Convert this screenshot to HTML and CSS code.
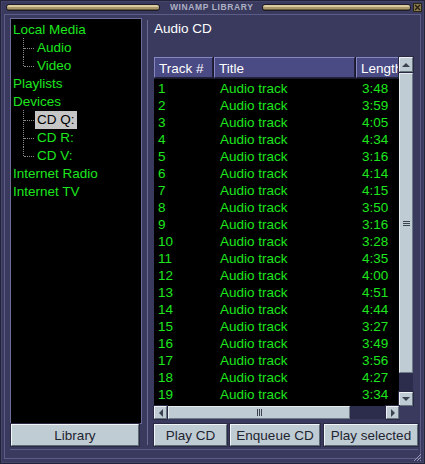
FILE: index.html
```html
<!DOCTYPE html>
<html>
<head>
<meta charset="utf-8">
<link rel="stylesheet" href="styles.css">
</head>
<body>
<div class="window">
  <div class="titlebar">
    <div class="grip grip-left"></div>
    <div class="title">WINAMP LIBRARY</div>
    <div class="grip grip-right"></div>
    <div class="close">
      <svg width="9" height="9" viewBox="0 0 9 9"><rect x="0.5" y="0.5" width="8" height="8" fill="#8a7a4e" stroke="#2a2618"/><path d="M2 2L7 7M7 2L2 7" stroke="#221e10" stroke-width="1.3"/></svg>
    </div>
  </div>
  <div class="frame">
    <div class="main">
      <div class="leftcol">
        <div class="tree">
          <div class="node">Local Media</div>
          <div class="children">
            <div class="child"><span class="label">Audio</span></div>
            <div class="child"><span class="label">Video</span></div>
          </div>
          <div class="node">Playlists</div>
          <div class="node">Devices</div>
          <div class="children">
            <div class="child"><span class="label selected">CD Q:</span></div>
            <div class="child"><span class="label">CD R:</span></div>
            <div class="child"><span class="label">CD V:</span></div>
          </div>
          <div class="node">Internet Radio</div>
          <div class="node">Internet TV</div>
        </div>
        <div class="btn btn-lib">Library</div>
      </div>
      <div class="divider"></div>
      <div class="rightcol">
        <div class="heading">Audio CD</div>
        <div class="list">
          <div class="listmain">
            <div class="header">
              <div class="hcell">Track #</div>
              <div class="hcell">Title</div>
              <div class="hcell">Length</div>
            </div>
            <div class="rows">
              <div class="row"><span>1</span><span>Audio track</span><span>3:48</span></div>
              <div class="row"><span>2</span><span>Audio track</span><span>3:59</span></div>
              <div class="row"><span>3</span><span>Audio track</span><span>4:05</span></div>
              <div class="row"><span>4</span><span>Audio track</span><span>4:34</span></div>
              <div class="row"><span>5</span><span>Audio track</span><span>3:16</span></div>
              <div class="row"><span>6</span><span>Audio track</span><span>4:14</span></div>
              <div class="row"><span>7</span><span>Audio track</span><span>4:15</span></div>
              <div class="row"><span>8</span><span>Audio track</span><span>3:50</span></div>
              <div class="row"><span>9</span><span>Audio track</span><span>3:16</span></div>
              <div class="row"><span>10</span><span>Audio track</span><span>3:28</span></div>
              <div class="row"><span>11</span><span>Audio track</span><span>4:35</span></div>
              <div class="row"><span>12</span><span>Audio track</span><span>4:00</span></div>
              <div class="row"><span>13</span><span>Audio track</span><span>4:51</span></div>
              <div class="row"><span>14</span><span>Audio track</span><span>4:44</span></div>
              <div class="row"><span>15</span><span>Audio track</span><span>3:27</span></div>
              <div class="row"><span>16</span><span>Audio track</span><span>3:49</span></div>
              <div class="row"><span>17</span><span>Audio track</span><span>3:56</span></div>
              <div class="row"><span>18</span><span>Audio track</span><span>4:27</span></div>
              <div class="row"><span>19</span><span>Audio track</span><span>3:34</span></div>
            </div>
          </div>
          <div class="vscroll">
            <div class="sbtn"><span class="arrow-up"></span></div>
            <div class="vthumb"><span class="vgrip"></span></div>
            <div class="strack"></div>
            <div class="sbtn sbtn-down"><span class="arrow-down"></span></div>
          </div>
          <div class="hscroll">
            <div class="sbtn"><span class="arrow-left"></span></div>
            <div class="hthumb"><span class="hgrip"></span></div>
            <div class="strack"></div>
            <div class="sbtn"><span class="arrow-right"></span></div>
          </div>
          <div class="corner"></div>
        </div>
        <div class="buttons">
          <div class="btn btn-play">Play CD</div>
          <div class="btn btn-enq">Enqueue CD</div>
          <div class="btn btn-sel">Play selected</div>
        </div>
      </div>
    </div>
    <div class="bottomline"></div>
  </div>
  <svg class="resize" width="9" height="9" viewBox="0 0 9 9">
    <path d="M8 1L1 8M8 4L4 8M8 7L7 8" stroke="#9a9ab8" stroke-width="1"/>
  </svg>
</div>
</body>
</html>
```

FILE: styles.css
```css
* { box-sizing: border-box; }
html, body { margin: 0; padding: 0; background: #393a5e; }
body {
  font-family: "Liberation Sans", Arial, sans-serif;
  font-size: 13.5px;
}
.window {
  position: relative;
  width: 425px;
  height: 464px;
  background: #393a5e;
  display: flex;
  flex-direction: column;
  box-shadow: inset 0 0 0 1px #23233a, inset 0 0 0 2px #45456c;
  overflow: hidden;
}
.titlebar {
  height: 14px;
  display: flex;
  align-items: center;
  padding: 0 3px 0 6px;
}
.grip {
  height: 7px;
  border: 1px solid #1c1c26;
  border-radius: 3px;
  background: linear-gradient(#dccca0 0, #dccca0 2px, #a8986c 2px, #a8986c 4px, #6c5e3c 4px);
}
.grip-left { width: 154px; }
.grip-right { flex: 1; }
.title {
  margin: 0 9px 0 10px;
  font-size: 8.5px;
  font-weight: bold;
  letter-spacing: 0.6px;
  color: #aeb0c4;
  line-height: 10px;
}
.close { width: 9px; height: 9px; margin-left: 2px; display: flex; }
.frame {
  flex: 1;
  margin: 0 4px 5px 4px;
  border: 1px solid #5c5c88;
  padding: 3px 2px 0 5px;
  display: flex;
  flex-direction: column;
}
.main {
  height: 429px;
  display: flex;
}
.leftcol {
  width: 132px;
  display: flex;
  flex-direction: column;
}
.tree {
  height: 406px;
  background: #000;
  border: 1px solid #6c6c96;
  padding: 2px 0 0 0;
  color: #1ee61e;
  line-height: 18px;
}
.node { padding-left: 2px; height: 18px; white-space: nowrap; }
.child {
  position: relative;
  height: 18px;
  padding-left: 24px;
}
.child::before {
  content: "";
  position: absolute;
  left: 12px;
  top: -1px;
  height: calc(100% + 1px);
  border-left: 1px dotted #8a8a8a;
}
.child:last-child::before { height: 10px; }
.child::after {
  content: "";
  position: absolute;
  left: 13px;
  top: 9px;
  width: 10px;
  border-top: 1px dotted #8a8a8a;
}
.label { padding: 0 2px; display: inline-block; height: 18px; }
.label.selected { background: #c6c6c6; color: #000; }
.btn {
  height: 22px;
  background: #c0ccd4;
  border: 1px solid;
  border-color: #f2f6f8 #5e6c78 #5e6c78 #f2f6f8;
  box-shadow: 0 0 0 1px #2a2a44;
  color: #1e2430;
  text-align: center;
  line-height: 20px;
  padding-top: 1px;
  white-space: nowrap;
  overflow: hidden;
}
.btn-lib { width: 128px; margin-left: 1px; }
.divider {
  width: 1px;
  margin: 2px 6px 2px 5px;
  background: #6a6a94;
}
.rightcol {
  flex: 1;
  display: flex;
  flex-direction: column;
}
.heading {
  height: 39px;
  padding-top: 1px;
  line-height: 20px;
  color: #ffffff;
}
.list {
  width: 259px;
  height: 362px;
  display: grid;
  grid-template-columns: 245px 14px;
  grid-template-rows: 349px 13px;
}
.listmain { background: #000; overflow: hidden; }
.header {
  height: 22px;
  display: grid;
  grid-template-columns: 60px 142px 1fr;
  background: #1a1a2c;
}
.hcell {
  height: 21px;
  margin-right: 1px;
  background: #4a4a84;
  border: 1px solid;
  border-color: #8686c2 #22223a #22223a #8686c2;
  color: #fff;
  padding-left: 4px;
  padding-top: 1px;
  line-height: 19px;
  white-space: nowrap;
  overflow: hidden;
}
.hcell:last-child { margin-right: 0; }
.rows { color: #1ee61e; padding-top: 1px; }
.row {
  height: 17px;
  line-height: 17px;
  display: grid;
  grid-template-columns: 60px 142px 1fr;
  white-space: nowrap;
}
.row span:nth-child(1) { padding-left: 4px; }
.row span:nth-child(2) { padding-left: 6px; }
.row span:nth-child(3) { padding-left: 6px; }
.vscroll {
  display: flex;
  flex-direction: column;
}
.sbtn {
  width: 13px;
  height: 13px;
  background: #c0ccd4;
  border: 1px solid;
  border-color: #eef2f6 #66747e #66747e #eef2f6;
  box-shadow: 0 0 0 1px #2a2a44;
  display: flex;
  align-items: center;
  justify-content: center;
  flex: none;
}
.vscroll .sbtn { width: 14px; height: 15px; }
.vscroll .sbtn-down { height: 14px; }
.vthumb {
  height: 300px;
  margin-top: 1px;
  background: #c0ccd4;
  border: 1px solid;
  border-color: #e6ecf0 #6e7c88 #6e7c88 #e6ecf0;
  display: flex;
  align-items: center;
  justify-content: center;
}
.vgrip {
  width: 7px;
  height: 5px;
  background: repeating-linear-gradient(#3c4450 0, #3c4450 1px, transparent 1px, transparent 2px);
}
.strack { flex: 1; background: #2c2c4c; }
.hscroll { display: flex; }
.hscroll .sbtn { height: 13px; }
.hthumb {
  width: 182px;
  margin-left: 1px;
  background: #c0ccd4;
  border: 1px solid;
  border-color: #e6ecf0 #6e7c88 #6e7c88 #e6ecf0;
  display: flex;
  align-items: center;
  justify-content: center;
}
.hgrip {
  width: 5px;
  height: 7px;
  background: repeating-linear-gradient(90deg, #3c4450 0, #3c4450 1px, transparent 1px, transparent 2px);
}
.corner { background: #393a5e; }
.arrow-up {
  width: 0; height: 0;
  border-left: 4px solid transparent;
  border-right: 4px solid transparent;
  border-bottom: 4px solid #3a4250;
}
.arrow-down {
  width: 0; height: 0;
  border-left: 4px solid transparent;
  border-right: 4px solid transparent;
  border-top: 4px solid #3a4250;
}
.arrow-left {
  width: 0; height: 0;
  border-top: 4px solid transparent;
  border-bottom: 4px solid transparent;
  border-right: 4px solid #3a4250;
}
.arrow-right {
  width: 0; height: 0;
  border-top: 4px solid transparent;
  border-bottom: 4px solid transparent;
  border-left: 4px solid #3a4250;
}
.buttons {
  margin-top: 5px;
  display: flex;
}
.btn-play { width: 73px; }
.btn-enq { width: 90px; margin-left: 3px; }
.btn-sel { width: 94px; margin-left: 4px; }
.bottomline {
  margin-top: 2px;
  height: 1px;
  background: #5a5a88;
}
.resize {
  position: absolute;
  right: 3px;
  bottom: 2px;
}
```
